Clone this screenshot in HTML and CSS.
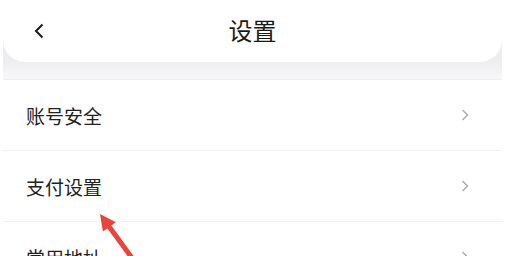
FILE: index.html
```html
<!DOCTYPE html>
<html lang="zh">
<head>
<meta charset="utf-8">
<link rel="stylesheet" href="styles.css">
</head>
<body>
<div class="page">
  <div class="top">
    <header class="header">
      <span class="back">
        <svg width="10" height="16" viewBox="0 0 10 16"><path d="M8.5 1.5 L2 8 L8.5 14.5" fill="none" stroke="#1a1a1a" stroke-width="2"/></svg>
      </span>
      <h1 class="title">设置</h1>
    </header>
  </div>
  <ul class="list">
    <li class="row"><span class="label">账号安全</span><svg class="chev" width="8" height="12" viewBox="0 0 8 12"><path d="M1.5 1 L6.5 6 L1.5 11" fill="none" stroke="#a8a8a8" stroke-width="1.4"/></svg></li>
    <li class="row"><span class="label">支付设置</span><svg class="chev" width="8" height="12" viewBox="0 0 8 12"><path d="M1.5 1 L6.5 6 L1.5 11" fill="none" stroke="#a8a8a8" stroke-width="1.4"/></svg></li>
    <li class="row"><span class="label">常用地址</span><svg class="chev" width="8" height="12" viewBox="0 0 8 12"><path d="M1.5 1 L6.5 6 L1.5 11" fill="none" stroke="#a8a8a8" stroke-width="1.4"/></svg></li>
  </ul>
</div>
<svg class="arrow" width="505" height="256" viewBox="0 0 505 256">
  <polygon points="100,214 115.9,222.2 111.4,225.4 134,256.5 130,259.5 107.4,228.4 102.9,231.6" fill="#e8453c"/>
</svg>
</body>
</html>
```

FILE: styles.css
```css
html, body {
  margin: 0;
  padding: 0;
  background: #ffffff;
  font-family: "Noto Sans CJK SC", "Noto Sans", sans-serif;
  overflow: hidden;
}
.page {
  padding: 0 3px;
  width: 499px;
}
.top {
  height: 79px;
  background: linear-gradient(#e8e8ec 0px, #eeeef1 62px, #f3f3f5 70px, #f7f7f8 79px);
  border-bottom: 1px solid #eeeeef;
}
.header {
  height: 62px;
  background: #ffffff;
  border-radius: 0 0 22px 22px;
  display: flex;
  align-items: center;
  justify-content: center;
  position: relative;
}
.back {
  position: absolute;
  left: 31px;
  top: 23px;
  display: flex;
}
.title {
  margin: 0;
  font-size: 24px;
  font-weight: 400;
  color: #1a1a1a;
  line-height: 1;
  margin-top: -2px;
}
.list {
  list-style: none;
  margin: 0;
  padding: 0;
}
.row {
  height: 70px;
  display: flex;
  align-items: center;
  justify-content: space-between;
  padding: 0 33px 0 23px;
  border-bottom: 1px solid #f1f1f2;
}
.label {
  font-size: 19px;
  color: #222222;
  line-height: 1;
}
.chev {
  display: block;
}
.arrow {
  position: absolute;
  left: 0;
  top: 0;
  pointer-events: none;
}
```
